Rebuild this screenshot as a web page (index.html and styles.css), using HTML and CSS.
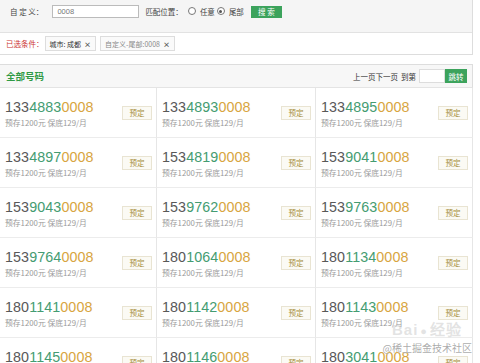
FILE: index.html
```html
<!DOCTYPE html>
<html lang="zh-CN">
<head>
    <meta charset="UTF-8">
    <meta name="viewport" content="width=device-width, initial-scale=1.0">
    <title>选号</title>
    <link rel="stylesheet" href="styles.css">
</head>
<body>
    <div class="page">
        <div class="filter">
            <div class="filter-row search-row">
                <span class="label">自 定 义：</span>
                <input class="text-input" type="text" value="0008">
                <span class="label match">匹配位置：</span>
                <span class="radio"></span><span class="label">任意</span>
                <span class="radio checked"></span><span class="label">尾部</span>
                <button class="green-btn search-btn">搜 索</button>
            </div>
            <div class="filter-row chosen-row">
                <span class="chosen-label">已选条件：</span>
                <span class="tag">城市: 成都 <b>×</b></span>
                <span class="tag muted">自定义-尾部:0008 <b>×</b></span>
            </div>
        </div>

        <div class="section-head">
            <span class="section-title">全部号码</span>
            <div class="pager">
                <span>上一页下一页</span>
                <span class="goto">到第</span>
                <input class="page-input" type="text">
                <button class="green-btn jump-btn">跳转</button>
            </div>
        </div>

        <div class="grid" id="grid"></div>

        <div class="watermark">
            <span class="wm-logo">Bai<i>●</i>经验</span>
            <span class="wm-text">@稀土掘金技术社区</span>
        </div>
    </div>

    <script>
        const numbers = [
            "13348830008", "13348930008", "13348950008",
            "13348970008", "15348190008", "15390410008",
            "15390430008", "15397620008", "15397630008",
            "15397640008", "18010640008", "18011340008",
            "18011410008", "18011420008", "18011430008",
            "18011450008", "18011460008", "18030410008"
        ];

        const grid = document.getElementById("grid");
        numbers.forEach(function (num) {
            const cell = document.createElement("div");
            cell.className = "cell";
            cell.innerHTML =
                '<div class="info">' +
                    '<div class="num"><span class="n1">' + num.slice(0, 3) + '</span>' +
                    '<span class="n2">' + num.slice(3, 7) + '</span>' +
                    '<span class="n3">' + num.slice(7) + '</span></div>' +
                    '<div class="price">预存1200元 保底129/月</div>' +
                '</div>' +
                '<button class="book-btn">预定</button>';
            grid.appendChild(cell);
        });
    </script>
</body>
</html>
```

FILE: styles.css
```css
body {
    margin: 0;
    background: #fff;
    font-family: "Noto Sans CJK SC", "Liberation Sans", sans-serif;
    color: #333;
    overflow: hidden;
}
.page {
    width: 473px;
    position: relative;
}

/* filter panel */
.filter {
    border-right: 1px solid #ddd;
    border-bottom: 1px solid #ddd;
}
.filter-row {
    display: flex;
    align-items: center;
    box-sizing: border-box;
}
.search-row {
    height: 33px;
    padding: 0 0 10px 10px;
    background: #f5f5f5;
    border-bottom: 1px solid #e2e2e2;
}
.chosen-row {
    height: 21px;
    padding-left: 6px;
}
.label { font-size: 7.5px; color: #444; }
.match { margin-left: 6px; margin-right: 3px; }
.text-input {
    width: 87px;
    height: 13px;
    box-sizing: border-box;
    margin-left: 9px;
    padding: 0 4px;
    border: 1px solid #bbb;
    font-size: 7.5px;
    color: #777;
    font-family: "Liberation Sans", sans-serif;
}
.radio {
    width: 6px;
    height: 6px;
    border: 1px solid #777;
    border-radius: 50%;
    margin: 0 4px 0 2px;
    background: #fff;
    position: relative;
}
.radio.checked::after {
    content: "";
    position: absolute;
    left: 1.5px;
    top: 1.5px;
    width: 3px;
    height: 3px;
    border-radius: 50%;
    background: #555;
}
.green-btn {
    border: none;
    background: #3ca35c;
    color: #fff;
    font-family: "Noto Sans CJK SC", sans-serif;
    padding: 0;
    font-size: 7.5px;
}
.search-btn {
    width: 31px;
    height: 12px;
    margin-left: 7px;
    margin-top: 1px;
}
.chosen-label { font-size: 7.5px; color: #c33; margin-right: 1px; }
.tag {
    display: inline-flex;
    align-items: center;
    height: 15px;
    box-sizing: border-box;
    padding: 0 4px;
    margin-right: 4px;
    border: 1px solid #ddd;
    background: #fafafa;
    font-size: 7px;
    color: #333;
}
.tag b { font-weight: bold; margin-left: 3px; color: #555; }
.tag.muted { color: #888; }

/* section header */
.section-head {
    margin-top: 9px;
    height: 24px;
    box-sizing: border-box;
    border-top: 1px solid #ddd;
    border-right: 1px solid #ddd;
    border-bottom: 1px solid #e4e4e4;
    background: #f7f7f7;
    display: flex;
    align-items: center;
    justify-content: space-between;
    padding: 0 5px 0 6px;
}
.section-title {
    font-size: 9.5px;
    font-weight: bold;
    color: #2f9a45;
}
.pager {
    display: flex;
    align-items: center;
    font-size: 7.5px;
    color: #333;
}
.goto { margin-left: 3px; }
.page-input {
    width: 26px;
    height: 14px;
    box-sizing: border-box;
    border: 1px solid #ddd;
    margin-left: 3px;
    padding: 0;
}
.jump-btn { width: 22px; height: 14px; }

/* number grid */
.grid {
    display: grid;
    grid-template-columns: 157px 159px 157px;
}
.cell {
    height: 50px;
    box-sizing: border-box;
    border-right: 1px solid #e6e6e6;
    border-bottom: 1px solid #ececec;
    display: flex;
    align-items: center;
    justify-content: space-between;
    padding: 0 4px 0 5px;
}
.info { padding-top: 1px; }
.num {
    font-family: "Liberation Sans", sans-serif;
    font-size: 14.3px;
    line-height: 17px;
    letter-spacing: 0.1px;
}
.n1 { color: #585858; }
.n2 { color: #449c72; }
.n3 { color: #d8a53f; }
.price {
    margin-top: 2px;
    font-size: 7.8px;
    line-height: 10px;
    color: #9a9a9a;
}
.book-btn {
    width: 30px;
    height: 14px;
    padding: 0;
    border: 1px solid #e9e4d2;
    background: #fbfaf4;
    color: #a68f3c;
    font-family: "Noto Sans CJK SC", sans-serif;
    font-size: 7.5px;
}

/* watermark overlay */
.watermark {
    position: absolute;
    left: 378px;
    top: 318px;
    width: 94px;
    display: flex;
    flex-direction: column;
    align-items: flex-end;
    pointer-events: none;
}
.wm-logo {
    font-family: "Liberation Sans", sans-serif;
    font-size: 15px;
    font-weight: bold;
    color: rgba(200, 200, 200, 0.5);
    letter-spacing: 1px;
    margin-right: 10px;
}
.wm-logo i { font-style: normal; font-size: 11px; margin: 0 2px; }
.wm-text {
    font-size: 10px;
    color: rgba(150, 150, 150, 0.8);
    text-shadow: 0 0 1px #fff;
    margin-top: 1px;
}
```
